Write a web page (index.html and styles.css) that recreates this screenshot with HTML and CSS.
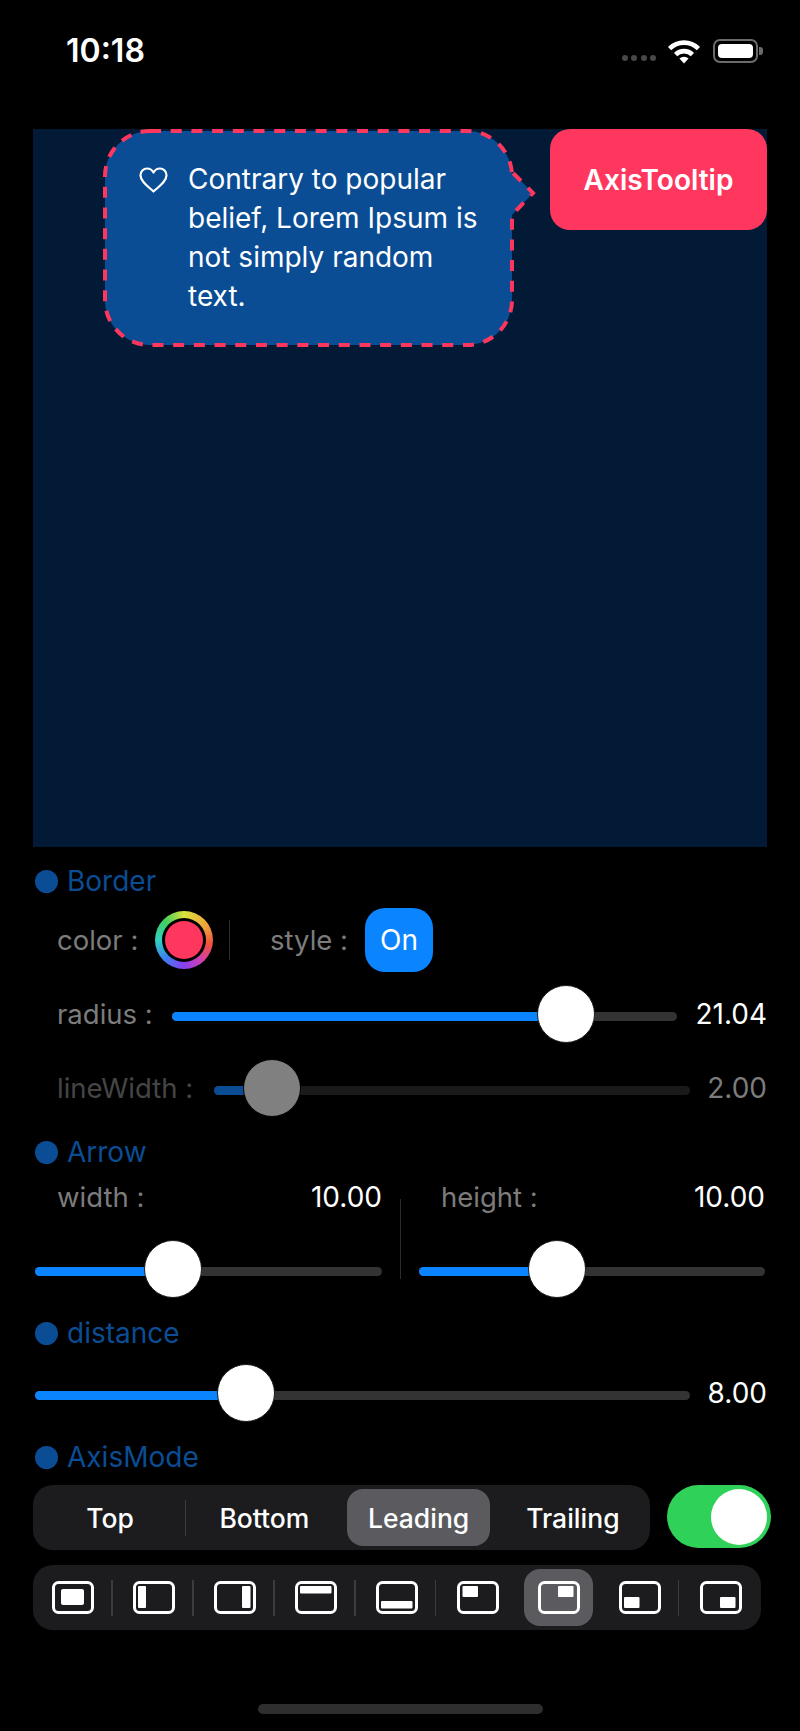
FILE: index.html
```html
<!DOCTYPE html>
<html lang="en">

<head>
    <meta charset="UTF-8">
    <meta name="viewport" content="width=device-width, initial-scale=1.0">
    <title>AxisTooltip</title>
    <link rel="stylesheet" href="styles.css">
</head>

<body>
    <div class="status">
        <span class="time">10:18</span>
        <div class="status-icons">
            <div class="signal"><i></i><i></i><i></i><i></i></div>
            <svg class="wifi" viewBox="0 0 34 26">
                <path d="M2.6 10.6a20.4 20.4 0 0 1 28.8 0" fill="none" stroke="#fff" stroke-width="4.6" />
                <path d="M8.6 16.6a11.9 11.9 0 0 1 16.8 0" fill="none" stroke="#fff" stroke-width="4.6" />
                <path d="M12.4 20.6a6.5 6.5 0 0 1 9.2 0L17 25.6z" fill="#fff" />
            </svg>
            <div class="battery"><i></i></div>
            <div class="battery-nub"></div>
        </div>
    </div>

    <div class="canvas">
        <div class="bubble">
            <svg class="bubble-shape" viewBox="0 0 440 220">
                <path d="M47 2H364A45 45 0 0 1 409 47V43L430 64L409 86V171A45 45 0 0 1 364 216H47A45 45 0 0 1 2 171V47A45 45 0 0 1 47 2Z"
                    fill="#0a4d94" stroke="#ff375f" stroke-width="4" stroke-dasharray="11 9.7" />
            </svg>
            <svg class="heart" viewBox="0 0 29 26">
                <path d="M14.5 24.5C9 19.5 1.5 14.5 1.5 8.2C1.5 4.4 4.4 1.5 8 1.5C10.7 1.5 13.2 3 14.5 5.6C15.8 3 18.3 1.5 21 1.5C24.6 1.5 27.5 4.4 27.5 8.2C27.5 14.5 20 19.5 14.5 24.5Z"
                    fill="none" stroke="#fff" stroke-width="2.2" stroke-linejoin="round" />
            </svg>
            <p class="bubble-text">Contrary to popular belief, Lorem Ipsum is not simply random text.</p>
        </div>
        <div class="anchor">AxisTooltip</div>
    </div>

    <div class="controls">
        <div class="head head-border"><i class="dot"></i>Border</div>

        <div class="color-row">
            <span class="label label-color">color :</span>
            <div class="well"><div class="well-inner"><div class="well-color"></div></div></div>
            <div class="vline"></div>
            <span class="label label-style">style :</span>
            <div class="on-btn">On</div>
        </div>

        <div class="slider-row row-radius">
            <span class="label label-radius">radius :</span>
            <div class="track">
                <div class="fill" style="width: 78%"></div>
                <div class="thumb" style="left: 78%"></div>
            </div>
            <span class="value value-wide">21.04</span>
        </div>

        <div class="slider-row row-line off">
            <span class="label label-line">lineWidth :</span>
            <div class="track">
                <div class="fill" style="width: 12.2%"></div>
                <div class="thumb" style="left: 12.2%"></div>
            </div>
            <span class="value">2.00</span>
        </div>

        <div class="head head-arrow"><i class="dot"></i>Arrow</div>

        <div class="arrow-row">
            <div class="arrow-col">
                <div class="arrow-top">
                    <span class="label">width :</span>
                    <span class="value-plain">10.00</span>
                </div>
                <div class="slider-row arrow-slider">
                    <div class="track">
                        <div class="fill" style="width: 39.8%"></div>
                        <div class="thumb" style="left: 39.8%"></div>
                    </div>
                </div>
            </div>
            <div class="arrow-sep"></div>
            <div class="arrow-col col-right">
                <div class="arrow-top">
                    <span class="label">height :</span>
                    <span class="value-plain">10.00</span>
                </div>
                <div class="slider-row arrow-slider">
                    <div class="track">
                        <div class="fill" style="width: 39.9%"></div>
                        <div class="thumb" style="left: 39.9%"></div>
                    </div>
                </div>
            </div>
        </div>

        <div class="head head-distance"><i class="dot"></i>distance</div>

        <div class="slider-row row-distance">
            <div class="track">
                <div class="fill" style="width: 32.2%"></div>
                <div class="thumb" style="left: 32.2%"></div>
            </div>
            <span class="value">8.00</span>
        </div>

        <div class="head head-axis"><i class="dot"></i>AxisMode</div>

        <div class="mode-row">
            <div class="segments">
                <div class="segment sep">Top</div>
                <div class="segment">Bottom</div>
                <div class="segment selected"><span>Leading</span></div>
                <div class="segment">Trailing</div>
            </div>
            <div class="toggle"><div class="toggle-knob"></div></div>
        </div>

        <div class="icon-bar">
            <div class="icon-cell sep">
                <svg viewBox="0 0 42 33"><rect class="frame" x="1.5" y="1.5" width="39" height="30" rx="5" /><rect class="mark" x="9" y="8" width="23" height="16" rx="2" /></svg>
            </div>
            <div class="icon-cell sep">
                <svg viewBox="0 0 42 33"><rect class="frame" x="1.5" y="1.5" width="39" height="30" rx="5" /><rect class="mark" x="5" y="5" width="8" height="22" rx="1" /></svg>
            </div>
            <div class="icon-cell sep">
                <svg viewBox="0 0 42 33"><rect class="frame" x="1.5" y="1.5" width="39" height="30" rx="5" /><rect class="mark" x="28" y="5" width="8.5" height="22" rx="1" /></svg>
            </div>
            <div class="icon-cell sep">
                <svg viewBox="0 0 42 33"><rect class="frame" x="1.5" y="1.5" width="39" height="30" rx="5" /><rect class="mark" x="5" y="5" width="31.5" height="7.5" rx="1" /></svg>
            </div>
            <div class="icon-cell sep">
                <svg viewBox="0 0 42 33"><rect class="frame" x="1.5" y="1.5" width="39" height="30" rx="5" /><rect class="mark" x="5" y="20" width="31.5" height="7.5" rx="1" /></svg>
            </div>
            <div class="icon-cell">
                <svg viewBox="0 0 42 33"><rect class="frame" x="1.5" y="1.5" width="39" height="30" rx="5" /><rect class="mark" x="5.5" y="5" width="15.5" height="11" rx="1" /></svg>
            </div>
            <div class="icon-cell selected">
                <svg viewBox="0 0 42 33"><rect class="frame" x="1.5" y="1.5" width="39" height="30" rx="5" /><rect class="mark" x="20" y="5" width="15.5" height="11" rx="1" /></svg>
            </div>
            <div class="icon-cell sep">
                <svg viewBox="0 0 42 33"><rect class="frame" x="1.5" y="1.5" width="39" height="30" rx="5" /><rect class="mark" x="5" y="16" width="15.5" height="11" rx="1" /></svg>
            </div>
            <div class="icon-cell">
                <svg viewBox="0 0 42 33"><rect class="frame" x="1.5" y="1.5" width="39" height="30" rx="5" /><rect class="mark" x="20" y="16" width="15.5" height="11" rx="1" /></svg>
            </div>
        </div>

        <div class="home-bar"></div>
    </div>
</body>

</html>
```

FILE: styles.css
```css
* {
    box-sizing: border-box;
}

body {
    margin: 0;
    height: 1731px;
    overflow: hidden;
    background-color: #000;
    color: #fff;
    font-family: Inter, "Liberation Sans", sans-serif;
}

/* status bar */
.status {
    height: 129px;
    padding: 32px 37px 0 66px;
    display: flex;
    justify-content: space-between;
    align-items: flex-start;
}

.time {
    font-size: 32px;
    line-height: 38px;
    font-weight: 600;
}

.status-icons {
    display: flex;
    align-items: center;
    height: 30px;
    margin-top: 4px;
}

.signal {
    display: flex;
    gap: 3.5px;
    margin: 13px 11px 0 0;
}

.signal i {
    width: 6px;
    height: 6px;
    border-radius: 50%;
    background-color: #484848;
}

.wifi {
    width: 34px;
    height: 26px;
    margin-right: 12px;
}

.battery {
    width: 45px;
    height: 24px;
    padding: 3px;
    border: 2px solid #6b6b6b;
    border-radius: 7px;
}

.battery i {
    display: block;
    height: 100%;
    border-radius: 4px;
    background-color: #fff;
}

.battery-nub {
    width: 4px;
    height: 8px;
    margin-left: 1px;
    border-radius: 0 3px 3px 0;
    background-color: #6b6b6b;
}

/* tooltip canvas */
.canvas {
    position: relative;
    height: 718px;
    margin: 0 33px;
    background-color: #021a35;
}

.bubble {
    position: absolute;
    left: 70px;
    top: 0;
    width: 440px;
    height: 220px;
}

.bubble-shape {
    position: absolute;
    left: 0;
    top: 0;
    width: 440px;
    height: 220px;
}

.heart {
    position: absolute;
    left: 36px;
    top: 38px;
    width: 29px;
    height: 26px;
}

.bubble-text {
    position: absolute;
    left: 85px;
    top: 31px;
    width: 296px;
    margin: 0;
    font-size: 28px;
    line-height: 39px;
}

.anchor {
    position: absolute;
    right: 0;
    top: 0;
    width: 217px;
    height: 101px;
    display: flex;
    align-items: center;
    justify-content: center;
    border-radius: 20px;
    background-color: #ff375f;
    font-size: 28px;
    font-weight: 600;
}

/* controls */
.controls {
    padding: 0 33px;
}

.head {
    display: flex;
    align-items: center;
    height: 34px;
    padding-left: 2px;
    font-size: 28px;
    color: #0a4d94;
}

.dot {
    width: 23px;
    height: 23px;
    margin-right: 9px;
    border-radius: 50%;
    background-color: #0a4d94;
}

.head-border {
    margin-top: 17px;
}

.head-arrow {
    margin-top: 19px;
}

.head-distance {
    margin-top: 19px;
}

.head-axis {
    margin-top: 19px;
}

.label {
    font-size: 27.5px;
    color: #7c7c7c;
}

.color-row {
    display: flex;
    align-items: center;
    height: 64px;
    margin-top: 10px;
    padding-left: 24px;
}

.label-color {
    width: 98px;
}

.well {
    width: 58px;
    height: 58px;
    padding: 7px;
    border-radius: 50%;
    background: conic-gradient(#d9e23a, #f0a03c 60deg, #f0503c 100deg, #d040b0 140deg, #8a40f0 180deg, #3a80f0 225deg, #30d0c0 270deg, #40d060 315deg, #d9e23a);
}

.well-inner {
    width: 44px;
    height: 44px;
    padding: 3px;
    border-radius: 50%;
    background-color: #000;
}

.well-color {
    width: 38px;
    height: 38px;
    border-radius: 50%;
    background-color: #ff375f;
}

.vline {
    width: 1px;
    height: 40px;
    margin: 0 40px 0 16px;
    background-color: #2c2c2c;
}

.label-style {
    width: 95px;
}

.on-btn {
    width: 68px;
    height: 64px;
    display: flex;
    align-items: center;
    justify-content: center;
    border-radius: 20px;
    background-color: #0a84ff;
    font-size: 28px;
}

/* sliders */
.slider-row {
    display: flex;
    align-items: center;
    height: 56px;
}

.row-radius,
.row-line {
    padding-left: 24px;
}

.row-radius {
    margin-top: 14px;
}

.row-line {
    margin-top: 18px;
}

.row-distance {
    margin-top: 15px;
    padding-left: 2px;
}

.label-radius {
    width: 115px;
}

.label-line {
    width: 157px;
    color: #454545;
}

.track {
    position: relative;
    flex: 1;
    height: 9px;
    margin-top: 5px;
    border-radius: 5px;
    background-color: #333;
}

.fill {
    height: 100%;
    border-radius: 5px;
    background-color: #0a84ff;
}

.thumb {
    position: absolute;
    top: 50%;
    width: 58px;
    height: 58px;
    margin: -31.5px 0 0 -29px;
    border: 1px solid #1c1c1c;
    border-radius: 50%;
    background-color: #fff;
}

.value {
    width: 77px;
    font-size: 28px;
    text-align: right;
}

.value-wide {
    width: 90px;
}

.off .track {
    background-color: #1a1a1a;
}

.off .fill {
    background-color: #0a4d94;
}

.off .thumb {
    background-color: #808080;
    border-color: #000;
}

.off .value {
    color: #7c7c7c;
}

/* arrow width and height */
.arrow-row {
    display: flex;
    margin-top: 13px;
    padding-left: 2px;
}

.arrow-col {
    width: 347px;
}

.col-right {
    width: 346px;
}

.arrow-top {
    display: flex;
    justify-content: space-between;
    align-items: center;
    height: 30px;
    padding-left: 22px;
}

.value-plain {
    font-size: 28px;
}

.arrow-slider {
    margin-top: 29px;
}

.arrow-sep {
    width: 1px;
    height: 80px;
    margin: 17px 18px 0;
    background-color: #2c2c2c;
}

/* axis mode */
.mode-row {
    display: flex;
    align-items: flex-start;
    margin-top: 11px;
}

.segments {
    display: grid;
    grid-template-columns: repeat(4, 1fr);
    flex-shrink: 0;
    width: 617px;
    height: 65px;
    border-radius: 20px;
    background-color: #1c1c1e;
}

.segment {
    position: relative;
    display: flex;
    align-items: center;
    justify-content: center;
    font-size: 26.5px;
    font-weight: 500;
}

.segment.selected span {
    display: flex;
    align-items: center;
    justify-content: center;
    width: 143px;
    height: 57px;
    border-radius: 16px;
    background-color: #5b5b5f;
}

.sep::after {
    content: "";
    position: absolute;
    right: 1px;
    top: 50%;
    width: 1.5px;
    height: 36px;
    margin-top: -18px;
    background-color: #3c3c3e;
}

.toggle {
    flex-shrink: 0;
    width: 104px;
    height: 63px;
    margin-left: 17px;
    padding: 4px;
    display: flex;
    justify-content: flex-end;
    border-radius: 32px;
    background-color: #30d158;
}

.toggle-knob {
    width: 56px;
    height: 56px;
    border-radius: 50%;
    background-color: #fff;
}

.icon-bar {
    display: grid;
    grid-template-columns: repeat(9, 1fr);
    width: 728px;
    height: 65px;
    margin-top: 15px;
    border-radius: 20px;
    background-color: #1c1c1e;
}

.icon-cell {
    position: relative;
    display: flex;
    align-items: center;
    justify-content: center;
}

.icon-cell svg {
    width: 42px;
    height: 33px;
}

.icon-cell.selected {
    margin: 4px 6px;
    border-radius: 16px;
    background-color: #5b5b5f;
}

.frame {
    fill: none;
    stroke: #fff;
    stroke-width: 3;
}

.mark {
    fill: #fff;
}

.home-bar {
    width: 285px;
    height: 10px;
    margin: 74px auto 0;
    border-radius: 5px;
    background-color: #2e2e2e;
}
```
